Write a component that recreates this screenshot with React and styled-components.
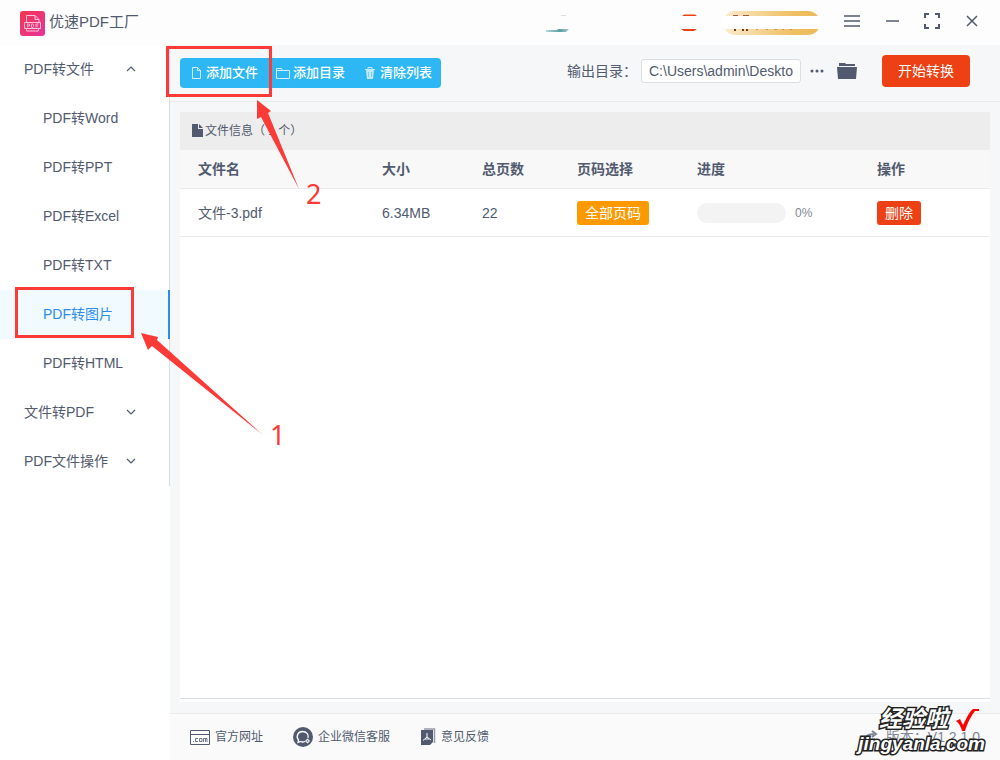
import React from 'react';
import styled, { createGlobalStyle } from 'styled-components';

const Global = createGlobalStyle`
  * { box-sizing: border-box; }
  body {
    margin: 0;
    color: #515a6e;
    background: #fff;
    font: 14px/20px "Liberation Sans", "Noto Sans CJK SC", sans-serif;
  }
  button, input { font: inherit; color: inherit; }
  button { cursor: pointer; }
  svg { display: block; flex: none; }
`;

const Page = styled.div`
  position: relative;
  display: flex;
  flex-direction: column;
  min-height: 100vh;
`;

const TitleBar = styled.header`
  display: flex;
  align-items: center;
  height: 45px;
  padding: 0 16px 0 20px;
  background: #fdfdfd;
`;

const Brand = styled.h1`
  display: flex;
  align-items: center;
  gap: 4px;
  margin: 0 auto 0 0;
  padding-top: 2px;
  font-size: 15px;
  line-height: 16px;
  font-weight: 400;
`;

const BrandName = styled.span`
  padding-bottom: 4px;
`;

const Promo = styled.div`
  display: flex;
  align-items: center;
  margin-right: 20px;
`;

const WindowButtons = styled.div`
  display: flex;
  gap: 16px;
  padding-bottom: 3px;
`;

const IconButton = styled.button`
  display: grid;
  place-items: center;
  width: ${(p) => p.$size || 24}px;
  height: 24px;
  padding: 0;
  border: 0;
  background: none;
`;

const Body = styled.div`
  display: flex;
  flex: 1;
`;

const Sidebar = styled.nav`
  flex: none;
  width: 170px;
  background: #fff;
`;

const Menu = styled.ul`
  margin: 0;
  padding: 0;
  list-style: none;
  box-shadow: inset -1px 0 #dcdee2;
`;

const Group = styled.button`
  display: flex;
  align-items: center;
  justify-content: space-between;
  width: 100%;
  height: 49px;
  padding: 0 34px 2px 24px;
  border: 0;
  background: none;
`;

const Item = styled.a`
  display: flex;
  align-items: center;
  height: 49px;
  padding: 0 0 2px 43px;
  color: ${(p) => (p.$active ? '#2d8cf0' : 'inherit')};
  background: ${(p) => (p.$active ? '#f0faff' : 'none')};
  border-right: ${(p) => (p.$active ? '2px solid #2d8cf0' : '0')};
  text-decoration: none;
`;

const Main = styled.main`
  display: flex;
  flex: 1;
  flex-direction: column;
  min-width: 0;
  background: #f5f7f9;
`;

const Toolbar = styled.div`
  display: flex;
  align-items: center;
  height: 57px;
  padding: 0 30px 4px 10px;
  border-bottom: 1px solid #e8eaec;
`;

const Actions = styled.div`
  display: flex;
  margin: 4px auto 0 0;
  border-radius: 4px;
  background: #2db7f5;
`;

const Action = styled.button`
  position: relative;
  display: flex;
  align-items: center;
  gap: 3px;
  height: 30px;
  padding: 0 9px;
  border: 0;
  background: none;
  color: #fff;
  font-size: 13px;
  font-weight: 500;
`;

const Output = styled.div`
  display: flex;
  align-items: center;
`;

const PathInput = styled.input`
  width: 160px;
  height: 24px;
  margin-left: 4px;
  padding: 0 7px;
  border: 1px solid #dcdee2;
  border-radius: 3px;
  background: #fff;
`;

const StartButton = styled.button`
  width: 88px;
  height: 32px;
  margin-left: 21px;
  padding: 0;
  border: 0;
  border-radius: 4px;
  background: #ed4014;
  color: #fff;
`;

const Panel = styled.section`
  flex: 1;
  margin: 10px 10px 11px;
  padding-bottom: 3px;
  background: #fff;
`;

const PanelInner = styled.div`
  height: 100%;
  border-bottom: 1px solid #dcdee2;
`;

const PanelTitle = styled.h2`
  display: flex;
  align-items: center;
  gap: 2px;
  height: 38px;
  margin: 0;
  padding-left: 12px;
  background: #ededed;
  font-size: 12px;
  font-weight: 400;
`;

const Table = styled.table`
  width: 100%;
  border-spacing: 0;
  table-layout: fixed;
  text-align: left;
`;

const Th = styled.th`
  width: ${(p) => p.$width || 'auto'};
  height: 39px;
  padding: 0 0 0 ${(p) => (p.$first ? 18 : 0)}px;
  border-bottom: 1px solid #e8eaec;
  background: #f8f8f9;
  font-weight: 700;
`;

const Td = styled.td`
  height: 48px;
  padding: 0 0 0 ${(p) => (p.$first ? 18 : 0)}px;
  border-bottom: 1px solid #e8eaec;
`;

const Tag = styled.button`
  display: block;
  height: 24px;
  padding: 0 8px;
  border: 0;
  border-radius: 3px;
  background: ${(p) => p.$color};
  color: #fff;
`;

const Progress = styled.div`
  display: flex;
  align-items: center;
  gap: 9px;
  font-size: 12px;
  color: #808695;
`;

const Track = styled.div`
  width: 89px;
  height: 20px;
  border-radius: 10px;
  background: #f3f3f3;
`;

const Footer = styled.footer`
  display: flex;
  align-items: center;
  gap: 30px;
  height: 47px;
  padding: 0 20px;
  border-top: 1px solid #e8eaec;
  background: #fafafa;
  font-size: 12px;
`;

const FooterLink = styled.a`
  display: flex;
  align-items: center;
  gap: 5px;
  color: inherit;
  text-decoration: none;
`;

const Version = styled.span`
  display: flex;
  align-items: center;
  gap: 8px;
  margin-left: auto;
  color: #808695;
  font-size: 14px;
`;

const Overlay = styled.svg`
  position: absolute;
  top: 0;
  left: 0;
  overflow: visible;
  pointer-events: none;
  font-family: "Noto Sans", sans-serif;
  font-size: 27px;
  fill: #fc3a37;
`;

const Watermark = styled.div`
  position: absolute;
  right: 15px;
  bottom: 5px;
  pointer-events: none;
  color: #fff;
  font: italic 700 19px/22px "Liberation Sans", "Noto Sans CJK SC", sans-serif;
  -webkit-text-stroke: 3px #222;
  paint-order: stroke fill;
  text-align: right;
`;

const WatermarkTop = styled.div`
  display: flex;
  justify-content: flex-end;
  gap: 7px;
  padding-right: 6px;
  font-size: 23px;
  line-height: 20px;
`;

const Icon = ({ w, h, children, ...rest }) => (
  <svg width={w} height={h} viewBox={`0 0 ${w} ${h}`} fill="none" stroke="currentColor" aria-hidden="true" {...rest}>
    {children}
  </svg>
);

const Logo = () => (
  <Icon w={25} h={25} stroke="#ffc4d8">
    <defs>
      <linearGradient id="logo" x1="0" y1="0" x2="1" y2="1">
        <stop offset="0" stopColor="#f2384f" />
        <stop offset="1" stopColor="#e8329b" />
      </linearGradient>
    </defs>
    <rect width="25" height="25" rx="3" fill="url(#logo)" stroke="none" />
    <path d="M6.500 11.500V4.500H15l4 4v3M15 4.500v4h4M4.500 11.500h16v6h-16zM6.500 17.500v2.500h12v-2.500" />
    <path d="M7.500 16.500v-3.500h2v2h-2M11.500 13v3.500h1.500l.5-1v-2l-.5-.5zM16 16.500V13h2.500M16 15h2" opacity=".8" />
  </Icon>
);

const Chevron = ({ up }) => (
  <Icon w={10} h={6} strokeWidth="1.200">
    <path d={up ? 'M1 5 5 1l4 4' : 'M1 1l4 4 4-4'} />
  </Icon>
);

const formats = ['PDF转Word', 'PDF转PPT', 'PDF转Excel', 'PDF转TXT', 'PDF转图片', 'PDF转HTML'];

export default function App() {
  return (
    <Page>
      <Global />
      <TitleBar>
        <Brand><Logo /><BrandName>优速PDF工厂</BrandName></Brand>
        <Promo>
          <svg width="274" height="24" aria-hidden="true">
            <defs>
              <linearGradient id="gold">
                <stop offset="0" stopColor="#fcebd0" />
                <stop offset=".7" stopColor="#efc065" />
                <stop offset="1" stopColor="#ecb957" />
              </linearGradient>
              <linearGradient id="teal">
                <stop offset="0" stopColor="#b5d6d8" />
                <stop offset=".6" stopColor="#5b9da3" />
                <stop offset="1" stopColor="#a9cfd1" />
              </linearGradient>
            </defs>
            <path d="M0 19h11l1-1h11l-3 3H0z" fill="url(#teal)" />
            <path d="M15 4.500h5" stroke="#ddd" />
            <path d="M136 5h15l-2-1.500h-11zM135 18h16l-3 2h-10z" fill="#ed4014" />
            <rect x="177" width="97" height="24" rx="12" fill="url(#gold)" />
            <path d="M187 4.500h5m5 0h6" stroke="#9a5f40" />
            <path d="M188 19h2m6 0h2m2 0h2" stroke="#6e3a24" strokeWidth="2" />
            <path d="M210 18.500h2m8 0h2m6 0h3m5 0h2m6 0h2" stroke="#b3823c" opacity=".6" />
            <path d="M175 5h99v13h-99z" fill="#fff" />
          </svg>
        </Promo>
        <WindowButtons>
          <IconButton aria-label="菜单"><Icon w={16} h={12} strokeWidth="1.500"><path d="M0 1h16M0 6h16M0 11h16" /></Icon></IconButton>
          <IconButton aria-label="最小化"><Icon w={13} h={2} strokeWidth="1.500"><path d="M0 1h13" /></Icon></IconButton>
          <IconButton aria-label="最大化"><Icon w={16} h={16} strokeWidth="2"><path d="M1 5V1h4M11 1h4v4M15 11v4h-4M5 15H1v-4" /></Icon></IconButton>
          <IconButton aria-label="关闭"><Icon w={12} h={12} strokeWidth="1.500"><path d="m1 1 10 10M11 1 1 11" /></Icon></IconButton>
        </WindowButtons>
      </TitleBar>
      <Body>
        <Sidebar>
          <Menu>
            <li><Group>PDF转文件<Chevron up /></Group></li>
            {formats.map((name) => (
              <li key={name}><Item href="#" $active={name === 'PDF转图片'}>{name}</Item></li>
            ))}
            <li><Group>文件转PDF<Chevron /></Group></li>
            <li><Group>PDF文件操作<Chevron /></Group></li>
          </Menu>
        </Sidebar>
        <Main>
          <Toolbar>
            <Actions>
              <Action>
                <Icon w={14} h={14} opacity=".8"><path d="M3.500 1.500h5l3 3v8h-8zM8.500 1.500v3h3" /></Icon>
                添加文件
              </Action>
              <Action>
                <Icon w={14} h={14} opacity=".8"><path d="M.5 2.500h5l1 2h7v8H.5zM.5 4.500h6" /></Icon>
                添加目录
              </Action>
              <Action>
                <Icon w={14} h={14} opacity=".7"><path d="M3 4h8l-1 9H4z" fill="currentColor" stroke="none" /><path d="M2 3.500h10M5 3V1.500h4V3" /><path d="M5.500 6v5M8.500 6v5" stroke="#2db7f5" opacity=".5" /></Icon>
                清除列表
              </Action>
            </Actions>
            <Output>
              <label htmlFor="output">输出目录：</label>
              <PathInput id="output" defaultValue="C:\Users\admin\Deskto" />
              <IconButton $size={32} aria-label="更多"><Icon w={14} h={4} fill="currentColor" stroke="none"><circle cx="2" cy="2" r="1.500" /><circle cx="7" cy="2" r="1.500" /><circle cx="12" cy="2" r="1.500" /></Icon></IconButton>
              <IconButton $size={28} aria-label="打开目录"><Icon w={20} h={18} fill="currentColor" stroke="none"><path d="M2 1h6l1 1h9v2H2zM0 5h20l-1 12H1z" /></Icon></IconButton>
            </Output>
            <StartButton>开始转换</StartButton>
          </Toolbar>
          <Panel>
            <PanelInner>
              <PanelTitle>
                <Icon w={11} h={14} fill="currentColor" stroke="none"><path d="M0 0h6v5h5v8H0zM7 0l4 4H7z" /></Icon>
                文件信息（ 1 个）
              </PanelTitle>
              <Table>
                <thead>
                  <tr>
                    <Th $first $width="202px">文件名</Th>
                    <Th $width="100px">大小</Th>
                    <Th $width="95px">总页数</Th>
                    <Th $width="120px">页码选择</Th>
                    <Th $width="180px">进度</Th>
                    <Th>操作</Th>
                  </tr>
                </thead>
                <tbody>
                  <tr>
                    <Td $first>文件-3.pdf</Td>
                    <Td>6.34MB</Td>
                    <Td>22</Td>
                    <Td><Tag $color="#f90">全部页码</Tag></Td>
                    <Td><Progress><Track />0%</Progress></Td>
                    <Td><Tag $color="#ed4014">删除</Tag></Td>
                  </tr>
                </tbody>
              </Table>
            </PanelInner>
          </Panel>
          <Footer>
            <FooterLink href="#">
              <Icon w={20} h={16}><path d="M.5 1.500h19v14H.5zM.5 5.500h19" /><path d="M3 12.500h1M8 9.500H5.500v3H8M9.500 9.500h2.500v3H9.500zM13.500 13V9.500H17V13M15.500 9.500V13" opacity=".8" /></Icon>
              官方网址
            </FooterLink>
            <FooterLink href="#">
              <Icon w={20} h={20}><circle cx="10" cy="10" r="10" fill="currentColor" stroke="none" /><path d="M12 14.500c-1.500.6-3.500.5-4.500 0L5 15.500l.5-2.500C2.500 9.500 5 4.500 9.500 4.500c4 0 6.500 3 5.500 6.500" stroke="#fff" strokeWidth="1.300" /><path d="m14.500 11.500 2.500 2.500-2.500 2.500-2.500-2.500z" fill="#fff" stroke="none" /><path d="M14.500 13v2M13.500 14h2" stroke="currentColor" strokeWidth=".6" /></Icon>
              企业微信客服
            </FooterLink>
            <FooterLink href="#">
              <Icon w={16} h={18}><path d="M4 1h10.500v14" opacity=".6" strokeWidth="1.500" /><path d="M1 2h12v12l-3 3H1z" fill="currentColor" stroke="none" /><path d="M7 5v4l-4 3.500M7 9l4 3M5 11h4" stroke="#fff" /></Icon>
              意见反馈
            </FooterLink>
            <Version>
              <Icon w={14} h={14} strokeWidth="2"><path d="M2 12V9c0-3 3-5 8-5M8 1l4 3-4 3" /></Icon>
              版本：V1.2.1.0
            </Version>
          </Footer>
        </Main>
      </Body>
      <Overlay width="330" height="450">
        <path d="M167.500 47.500h103v48h-103zM16.500 288.500h116v48h-116z" fill="none" stroke="#fc3a37" strokeWidth="3" />
        <path d="m257 100 14 11-3 2 31 76-38-72-4 2zM141 333l17 4-1 3 106 95-111-89-4 4z" />
        <text x="306" y="204">2</text>
        <text x="270" y="445">1</text>
      </Overlay>
      <Watermark>
        <WatermarkTop>
          经验啦
          <svg width="24" height="24" viewBox="0 0 24 24" aria-hidden="true"><path d="m1 12 4-2 3 6C12 8 15 2 18 0h6v2h-4C16 7 12 15 10 22H7C6 18 4 14 1 12z" fill="red" /></svg>
        </WatermarkTop>
        jingyanla.com
      </Watermark>
    </Page>
  );
}
